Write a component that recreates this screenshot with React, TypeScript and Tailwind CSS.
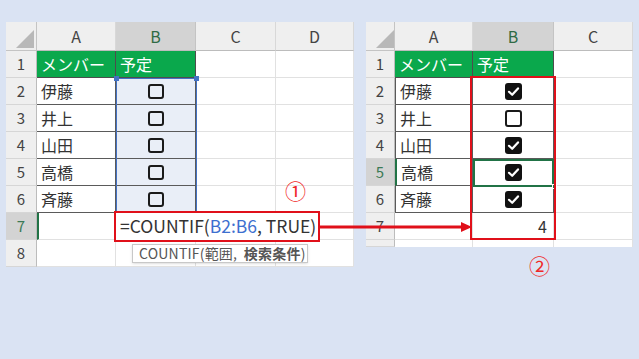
import React from 'react';

const names = ['伊藤', '井上', '山田', '高橋', '斉藤'];
const rightChecks = [true, false, true, true, true];

const Corner = () => (
  <div className="relative h-[29px] bg-[#efefef] border-r border-b border-[#c4c4c4]">
    <svg className="absolute left-0 top-0" width="31" height="29">
      <polygon points="28,8 28,26 10,26" fill="#b8b8b8" />
    </svg>
  </div>
);

const ColHead = ({ label, active }: { label: string; active?: boolean }) => (
  <div
    className={
      active
        ? 'flex items-center justify-center h-[29px] text-[16px] bg-[#d3d3d3] text-[#2f6b45] border-r border-b border-r-[#c4c4c4] border-b-[#bcbcbc]'
        : 'flex items-center justify-center h-[29px] text-[16px] bg-[#efefef] text-[#444] border-r border-b border-r-[#d8d8d8] border-b-[#bcbcbc]'
    }
  >
    {label}
  </div>
);

const RowHead = ({ n, active, short }: { n?: number; active?: boolean; short?: boolean }) => (
  <div
    className={
      (short ? 'h-[7px] ' : 'h-[27px] ') +
      (active
        ? 'flex items-center justify-center text-[15px] bg-[#d3d3d3] text-[#3b7a55] border-r border-b border-r-[#bcbcbc] border-b-[#d6d6d6]'
        : 'flex items-center justify-center text-[15px] bg-[#efefef] text-[#444] border-r border-b border-r-[#bcbcbc] border-b-[#d6d6d6]')
    }
  >
    {n}
  </div>
);

// plain grid cell; table cells pass their own border/bg classes
const Cell = ({ className, children }: { className?: string; children?: React.ReactNode }) => (
  <div className={'flex items-center h-[27px] border-r border-b ' + (className ?? 'bg-white border-[#e1e1e1]')}>
    {children}
  </div>
);

const head = 'bg-[#0aa84c] text-white text-[16px] pl-[4px] border-[#4d4d4d]';
const nameCell = 'bg-white text-[16px] text-[#333] pl-[4px] border-[#5a5a5a]';

const EmptyBox = ({ size }: { size: number }) => (
  <div
    className={
      size === 16
        ? 'w-[16px] h-[15px] border-2 border-[#1a1a1a] rounded-[3px]'
        : 'w-[17px] h-[17px] border-2 border-[#1a1a1a] rounded-[3px]'
    }
  />
);

const CheckedBox = () => (
  <svg width="17" height="17" viewBox="0 0 17 17">
    <rect x="0" y="0" width="17" height="17" rx="3" fill="#111" />
    <path d="M4 8.8 L7.2 11.8 L13 5.4" stroke="#fff" strokeWidth="2.2" fill="none" strokeLinecap="round" strokeLinejoin="round" />
  </svg>
);

const LeftSheet = () => (
  <div className="relative w-[348px] bg-white">
    <div className="grid grid-cols-[31px_79px_80px_80px_78px]">
      <Corner />
      <ColHead label="A" />
      <ColHead label="B" active />
      <ColHead label="C" />
      <ColHead label="D" />

      <RowHead n={1} />
      <Cell className={head}>メンバー</Cell>
      <Cell className={head}>予定</Cell>
      <Cell />
      <Cell />

      {names.map((name, i) => (
        <React.Fragment key={name}>
          <RowHead n={i + 2} />
          <Cell className={nameCell}>{name}</Cell>
          <Cell className="justify-center bg-[#e9eef7] border-[#5a5a5a]">
            <EmptyBox size={16} />
          </Cell>
          <Cell />
          <Cell />
        </React.Fragment>
      ))}

      <RowHead n={7} active />
      <Cell className="bg-white border-[#e1e1e1] border-l-2 border-l-[#217346]" />
      <Cell />
      <Cell />
      <Cell />

      <RowHead n={8} />
      <Cell />
      <Cell />
      <Cell />
      <Cell />
    </div>

    {/* B2:B6 selection */}
    <div className="absolute left-[110px] top-[56px] w-[81px] h-[136px] border-[1.5px] border-[#4472c4]" />
    <div className="absolute left-[108px] top-[54px] w-[5px] h-[5px] bg-[#4472c4]" />
    <div className="absolute left-[188px] top-[54px] w-[5px] h-[5px] bg-[#4472c4]" />

    {/* formula in edit */}
    <div className="absolute left-[108px] top-[189px] w-[206px] h-[31px] bg-white border-2 border-[#e0101a] flex items-center pl-[4px] text-[17.5px] text-[#333] whitespace-pre">
      =COUNTIF(<span className="text-[#3d6fcf]">B2:B6</span>, TRUE)
    </div>

    {/* tooltip */}
    <div className="absolute left-[126px] top-[222px] w-[176px] h-[19px] bg-white border border-[#c8c8c8] shadow-sm flex items-center pl-[6px] text-[14px] tracking-[0.2px] text-[#555] whitespace-pre">
      COUNTIF(範囲,  <span className="font-bold">検索条件</span>)
    </div>
  </div>
);

const RightSheet = () => (
  <div className="relative w-[267px] bg-white">
    <div className="grid grid-cols-[29px_78px_81px_79px]">
      <Corner />
      <ColHead label="A" />
      <ColHead label="B" active />
      <ColHead label="C" />

      <RowHead n={1} />
      <Cell className={head}>メンバー</Cell>
      <Cell className={head}>予定</Cell>
      <Cell />

      {names.map((name, i) => (
        <React.Fragment key={name}>
          <RowHead n={i + 2} active={i === 3} />
          <Cell
            className={
              i === 3
                ? nameCell + ' border-l-2 border-l-[#217346]'
                : nameCell + ' border-l'
            }
          >
            {name}
          </Cell>
          <Cell className="justify-center bg-white border-[#5a5a5a]">
            {rightChecks[i] ? <CheckedBox /> : <EmptyBox size={17} />}
          </Cell>
          <Cell />
        </React.Fragment>
      ))}

      <RowHead n={7} />
      <Cell />
      <Cell className="justify-end pr-[6px] text-[16px] text-[#333] bg-white border-[#e1e1e1]">4</Cell>
      <Cell />

      <RowHead short />
      <div className="h-[7px] border-r border-[#e1e1e1] bg-white" />
      <div className="h-[7px] border-r border-[#e1e1e1] bg-white" />
      <div className="h-[7px] border-r border-[#e1e1e1] bg-white" />
    </div>

    {/* B5 active cell */}
    <div className="absolute left-[107px] top-[137px] w-[81px] h-[28px] border-2 border-[#217346]" />
    <div className="absolute left-[186px] top-[162px] w-[5px] h-[5px] bg-[#217346] border border-white" />

    {/* red box B2:B7 */}
    <div className="absolute left-[104px] top-[54px] w-[86px] h-[164px] border-[2.5px] border-[#e0101a]" />
  </div>
);

export default function App() {
  return (
    <div className="relative w-[639px] h-[359px] overflow-hidden bg-[#dae3f3] font-['Noto_Sans_CJK_JP',sans-serif]">
      <div className="flex items-start gap-[12px] pt-[22px] pl-[6px]">
        <LeftSheet />
        <RightSheet />
      </div>

      {/* arrow */}
      <svg className="absolute left-[318px] top-[220px]" width="156" height="14">
        <line x1="2" y1="7" x2="146" y2="7" stroke="#e0101a" strokeWidth="3" />
        <polygon points="143,2 154,7 143,12" fill="#e0101a" />
      </svg>

      <div className="absolute left-[285px] top-[180px] text-[21px] leading-none text-[#f02828]">①</div>
      <div className="absolute left-[529px] top-[255px] text-[21px] leading-none text-[#f02828]">②</div>
    </div>
  );
}
